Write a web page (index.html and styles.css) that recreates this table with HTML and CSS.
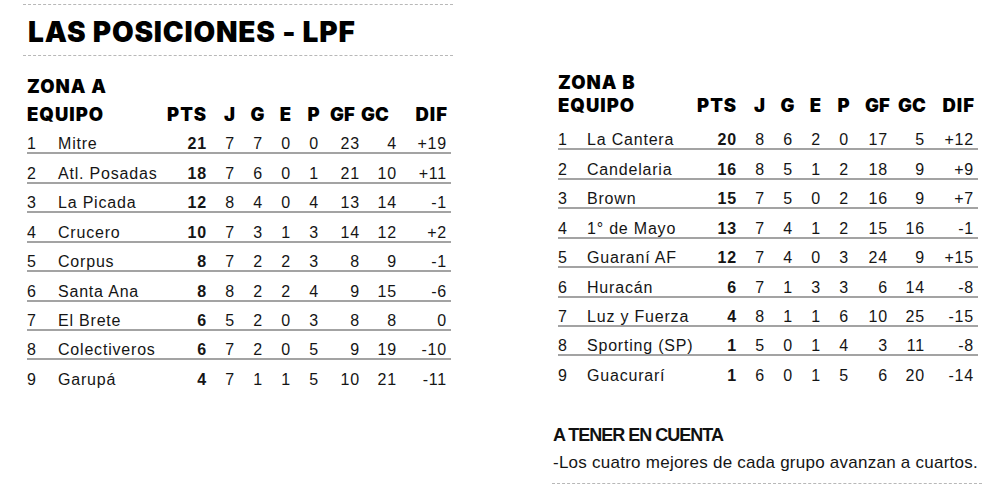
FILE: index.html
```html
<!DOCTYPE html>
<html lang="es">
<head>
<meta charset="utf-8">
<title>Las posiciones - LPF</title>
<link rel="stylesheet" href="styles.css">
</head>
<body>
<div class="page">
  <section class="col col-left">
    <div class="rule"></div>
    <h1 class="title">LAS POSICIONES - LPF</h1>
    <div class="rule"></div>
    <div class="zone zone-a">
      <h2 class="zone-name">ZONA A</h2>
      <div class="row head">
        <span class="c-team">EQUIPO</span><span class="c-pts">PTS</span><span class="c-s">J</span><span class="c-s">G</span><span class="c-s">E</span><span class="c-s">P</span><span class="c-gf">GF</span><span class="c-gc">GC</span><span class="c-dif">DIF</span>
      </div>
      <div class="row"><span>1</span><span>Mitre</span><span class="c-pts">21</span><span class="c-s">7</span><span class="c-s">7</span><span class="c-s">0</span><span class="c-s">0</span><span class="c-gf">23</span><span class="c-gc">4</span><span class="c-dif">+19</span></div>
      <div class="row"><span>2</span><span>Atl. Posadas</span><span class="c-pts">18</span><span class="c-s">7</span><span class="c-s">6</span><span class="c-s">0</span><span class="c-s">1</span><span class="c-gf">21</span><span class="c-gc">10</span><span class="c-dif">+11</span></div>
      <div class="row"><span>3</span><span>La Picada</span><span class="c-pts">12</span><span class="c-s">8</span><span class="c-s">4</span><span class="c-s">0</span><span class="c-s">4</span><span class="c-gf">13</span><span class="c-gc">14</span><span class="c-dif">-1</span></div>
      <div class="row"><span>4</span><span>Crucero</span><span class="c-pts">10</span><span class="c-s">7</span><span class="c-s">3</span><span class="c-s">1</span><span class="c-s">3</span><span class="c-gf">14</span><span class="c-gc">12</span><span class="c-dif">+2</span></div>
      <div class="row"><span>5</span><span>Corpus</span><span class="c-pts">8</span><span class="c-s">7</span><span class="c-s">2</span><span class="c-s">2</span><span class="c-s">3</span><span class="c-gf">8</span><span class="c-gc">9</span><span class="c-dif">-1</span></div>
      <div class="row"><span>6</span><span>Santa Ana</span><span class="c-pts">8</span><span class="c-s">8</span><span class="c-s">2</span><span class="c-s">2</span><span class="c-s">4</span><span class="c-gf">9</span><span class="c-gc">15</span><span class="c-dif">-6</span></div>
      <div class="row"><span>7</span><span>El Brete</span><span class="c-pts">6</span><span class="c-s">5</span><span class="c-s">2</span><span class="c-s">0</span><span class="c-s">3</span><span class="c-gf">8</span><span class="c-gc">8</span><span class="c-dif">0</span></div>
      <div class="row"><span>8</span><span>Colectiveros</span><span class="c-pts">6</span><span class="c-s">7</span><span class="c-s">2</span><span class="c-s">0</span><span class="c-s">5</span><span class="c-gf">9</span><span class="c-gc">19</span><span class="c-dif">-10</span></div>
      <div class="row last"><span>9</span><span>Garupá</span><span class="c-pts">4</span><span class="c-s">7</span><span class="c-s">1</span><span class="c-s">1</span><span class="c-s">5</span><span class="c-gf">10</span><span class="c-gc">21</span><span class="c-dif">-11</span></div>
    </div>
  </section>

  <section class="col col-right">
    <div class="zone zone-b">
      <h2 class="zone-name">ZONA B</h2>
      <div class="row head">
        <span class="c-team">EQUIPO</span><span class="c-pts">PTS</span><span class="c-s">J</span><span class="c-s">G</span><span class="c-s">E</span><span class="c-s">P</span><span class="c-gf">GF</span><span class="c-gc">GC</span><span class="c-dif">DIF</span>
      </div>
      <div class="row"><span>1</span><span>La Cantera</span><span class="c-pts">20</span><span class="c-s">8</span><span class="c-s">6</span><span class="c-s">2</span><span class="c-s">0</span><span class="c-gf">17</span><span class="c-gc">5</span><span class="c-dif">+12</span></div>
      <div class="row"><span>2</span><span>Candelaria</span><span class="c-pts">16</span><span class="c-s">8</span><span class="c-s">5</span><span class="c-s">1</span><span class="c-s">2</span><span class="c-gf">18</span><span class="c-gc">9</span><span class="c-dif">+9</span></div>
      <div class="row"><span>3</span><span>Brown</span><span class="c-pts">15</span><span class="c-s">7</span><span class="c-s">5</span><span class="c-s">0</span><span class="c-s">2</span><span class="c-gf">16</span><span class="c-gc">9</span><span class="c-dif">+7</span></div>
      <div class="row"><span>4</span><span>1° de Mayo</span><span class="c-pts">13</span><span class="c-s">7</span><span class="c-s">4</span><span class="c-s">1</span><span class="c-s">2</span><span class="c-gf">15</span><span class="c-gc">16</span><span class="c-dif">-1</span></div>
      <div class="row"><span>5</span><span>Guaraní AF</span><span class="c-pts">12</span><span class="c-s">7</span><span class="c-s">4</span><span class="c-s">0</span><span class="c-s">3</span><span class="c-gf">24</span><span class="c-gc">9</span><span class="c-dif">+15</span></div>
      <div class="row"><span>6</span><span>Huracán</span><span class="c-pts">6</span><span class="c-s">7</span><span class="c-s">1</span><span class="c-s">3</span><span class="c-s">3</span><span class="c-gf">6</span><span class="c-gc">14</span><span class="c-dif">-8</span></div>
      <div class="row"><span>7</span><span>Luz y Fuerza</span><span class="c-pts">4</span><span class="c-s">8</span><span class="c-s">1</span><span class="c-s">1</span><span class="c-s">6</span><span class="c-gf">10</span><span class="c-gc">25</span><span class="c-dif">-15</span></div>
      <div class="row"><span>8</span><span>Sporting (SP)</span><span class="c-pts">1</span><span class="c-s">5</span><span class="c-s">0</span><span class="c-s">1</span><span class="c-s">4</span><span class="c-gf">3</span><span class="c-gc">11</span><span class="c-dif">-8</span></div>
      <div class="row last"><span>9</span><span>Guacurarí</span><span class="c-pts">1</span><span class="c-s">6</span><span class="c-s">0</span><span class="c-s">1</span><span class="c-s">5</span><span class="c-gf">6</span><span class="c-gc">20</span><span class="c-dif">-14</span></div>
    </div>
    <div class="notes">
      <h3 class="notes-title">A TENER EN CUENTA</h3>
      <p class="notes-text">-Los cuatro mejores de cada grupo avanzan a cuartos.</p>
    </div>
    <div class="rule"></div>
  </section>
</div>
</body>
</html>
```
FILE: styles.css
```css
* { box-sizing: border-box; }

body {
  margin: 0;
  background: #ffffff;
  color: #151515;
  font-family: "Liberation Sans", Arial, sans-serif;
}

.page {
  display: flex;
  width: 1000px;
  height: 489px;
  overflow: hidden;
}

.col { width: 430px; }

.col-left {
  margin-left: 23px;
  padding-top: 4px;
}

.col-right {
  margin-left: 99px;
}

.rule {
  border-top: 1px dashed #b8b8b8;
}

.title {
  margin: 13px 0 9px 5px;
  font-family: Inter, "DejaVu Sans", sans-serif;
  font-weight: 900;
  font-size: 28px;
  line-height: 28px;
  letter-spacing: 0.8px;
  color: #000;
}

.zone-name {
  margin: 0;
  font-family: Inter, "DejaVu Sans", sans-serif;
  font-weight: 900;
  font-size: 18.5px;
  line-height: 18px;
  letter-spacing: 1px;
  color: #000;
}

.zone-a {
  margin: 21px 0 0 4px;
  width: 424px;
}

.zone-b {
  margin: 73px 0 0 6px;
  width: 420px;
}

.row {
  display: grid;
  grid-template-columns: 31px 109px 49px 28px 28px 28px 28px 32px 37px 54px;
  align-items: end;
  height: 29.43px;
  border-bottom: 2px solid #a3a3a3;
  font-size: 16px;
  line-height: 16px;
  letter-spacing: 0.8px;
  white-space: nowrap;
}

.zone-b .row {
  grid-template-columns: 29px 110px 49px 28px 28px 28px 28px 30px 37px 53px;
}

.row.last { border-bottom-color: transparent; }

.row.head {
  height: auto;
  border-bottom: 0;
  font-family: Inter, "DejaVu Sans", sans-serif;
  font-weight: 900;
  font-size: 18.5px;
  line-height: 18px;
  letter-spacing: 1px;
  color: #000;
}

.zone-a .row.head { margin: 10px 0 2px; }
.zone-b .row.head { margin: 5px 0 7px; }

.c-team { grid-column: 1 / 3; }

.c-pts {
  text-align: right;
  padding-right: 9px;
}

.row:not(.head) .c-pts { font-weight: 700; }

.c-s { text-align: center; }

.c-gf, .c-gc { text-align: right; }

.head .c-gf,
.head .c-gc {
  text-align: left;
  letter-spacing: 0;
}

.zone-a .head .c-gf { padding-left: 2px; }
.zone-a .head .c-gc { padding-left: 1px; }
.zone-b .head .c-gf { padding-left: 7px; }
.zone-b .head .c-gc { padding-left: 10px; }

.c-dif {
  text-align: right;
  padding-right: 4px;
}

.head .c-dif { padding-right: 3px; }

.notes { margin: 40px 0 12px 1px; }

.notes-title {
  margin: 0;
  font-family: "Liberation Sans Narrow", "Liberation Sans", sans-serif;
  font-weight: 700;
  font-size: 18px;
  line-height: 18px;
  letter-spacing: -1px;
  color: #111;
}

.notes-text {
  margin: 11px 0 0;
  font-size: 17px;
  line-height: 16px;
  letter-spacing: 0.25px;
}
```
